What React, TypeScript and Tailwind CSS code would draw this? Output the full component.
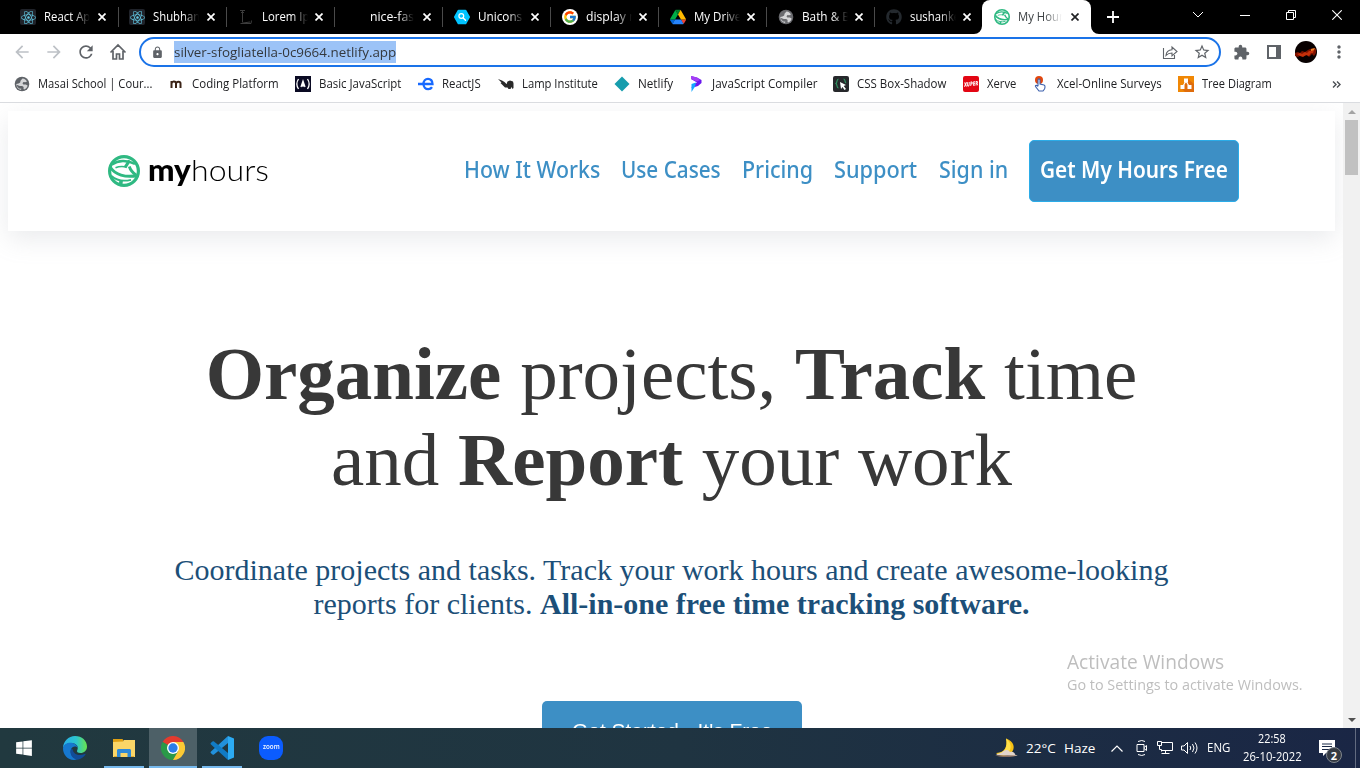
import { useLayoutEffect, useRef, useState, type ReactNode } from "react";
import { FaReact, FaWindows, FaGithub } from "react-icons/fa";
import { FcGoogle } from "react-icons/fc";
import {
  MdArrowBack,
  MdArrowForward,
  MdRefresh,
  MdLock,
  MdStarBorder,
  MdExtension,
  MdMoreVert,
} from "react-icons/md";

/** A single line of text, condensed or stretched to fill `width` pixels. */
function Line({ children, width, className = "" }: { children: string; width: number; className?: string }) {
  const ref = useRef<HTMLSpanElement>(null);
  const [scale, setScale] = useState(1);
  useLayoutEffect(() => {
    const el = ref.current;
    if (el) setScale(width / el.offsetWidth);
  }, [children, width]);
  return (
    <span className={`block shrink-0 text-left whitespace-nowrap ${className}`} style={{ width }}>
      <span ref={ref} className="inline-block origin-left" style={{ transform: `scaleX(${scale})` }}>
        {children}
      </span>
    </span>
  );
}

function ReactTile() {
  return (
    <span className="flex size-4 items-center justify-center rounded-xs bg-[#20232a]">
      <FaReact className="size-[15px] text-[#61c5e0]" />
    </span>
  );
}

function Globe({ className }: { className: string }) {
  return (
    <svg viewBox="0 0 16 16" className={`size-4 ${className}`}>
      <circle cx="8" cy="8" r="7.300" fill="currentColor" />
      <path
        d="M8.500 2.500c2 .2 3.800 1.500 4.500 3l-1.800.8-1.700-.3-1 1.200.8 1.200 2.500.2 1.800.9c-.3 2-1.800 3.600-3.600 4.100l-.6-1.400.3-1.300-1.600-1-2.300.2-3.200-1.300c.3 1.500 1.500 3.200 3.200 3.900l1.400-.1-.1 1.300C4.200 13.400 2.200 11 2.200 8l2.300-.4 1.700-1.200.3-1.600z"
        className="text-[#d5d6d8]"
        fill="currentColor"
      />
    </svg>
  );
}

function HoursMark({ className }: { className: string }) {
  return (
    <svg viewBox="0 0 32 32" className={className} fill="none" stroke="#2fb982">
      <circle cx="16" cy="16" r="14.400" strokeWidth="3.200" />
      <path d="M4 9.500C10 5.200 19 4.800 27 9" strokeWidth="2.400" />
      <path d="M2.500 12.500C7 19.500 17 23 30 20.500" strokeWidth="3" />
      <path d="M21.500 5.500L17 12.500" strokeWidth="3.200" />
      <path d="M7.500 12.800C11 11.300 15 11.300 18.500 12" strokeWidth="1.600" />
      <path d="M21.300 11.500C22.300 15 24.500 17.500 28 20" strokeWidth="2.800" />
      <path d="M3.500 21C8 25 15 26.800 23 24.800" strokeWidth="1.800" />
      <path d="M13.200 25L12.500 30" strokeWidth="3.600" />
    </svg>
  );
}

function DriveIcon() {
  return (
    <svg viewBox="0 0 87.300 78" className="size-4">
      <path d="M6.600 66.850l3.850 6.650c.8 1.400 1.950 2.500 3.300 3.300L27.500 53H0c0 1.550.4 3.100 1.200 4.500z" fill="#0066da" />
      <path d="M43.650 25L29.900 1.200c-1.350.8-2.500 1.900-3.300 3.300L1.200 48.500A9.060 9.060 0 0 0 0 53h27.500z" fill="#00ac47" />
      <path d="M73.550 76.800c1.350-.8 2.500-1.900 3.300-3.300l1.600-2.750 7.650-13.250c.8-1.400 1.200-2.950 1.200-4.500H59.800l5.850 11.500z" fill="#ea4335" />
      <path d="M43.650 25L57.400 1.200C56.050.4 54.500 0 52.900 0H34.400c-1.600 0-3.150.45-4.500 1.200z" fill="#00832d" />
      <path d="M59.800 53H27.500L13.750 76.800c1.350.8 2.900 1.200 4.500 1.200h50.800c1.600 0 3.150-.45 4.500-1.200z" fill="#2684fc" />
      <path d="M73.400 26.500L60.700 4.500c-.8-1.400-1.950-2.500-3.300-3.300L43.650 25 59.800 53h27.450c0-1.550-.4-3.100-1.200-4.500z" fill="#ffba00" />
    </svg>
  );
}

function UniconsIcon() {
  return (
    <svg viewBox="0 0 16 16" className="size-4">
      <path d="M4.500 1.800h7L15 8l-3.500 6.200h-7L1 8z" fill="#00c3ff" stroke="#00c3ff" strokeWidth="2" strokeLinejoin="round" />
      <circle cx="7.300" cy="7" r="2.400" fill="none" stroke="#fff" strokeWidth="1.200" />
      <path d="M9.200 9l2.300 2.300" stroke="#fff" strokeWidth="1.400" strokeLinecap="round" />
    </svg>
  );
}

function LoremIcon() {
  return (
    <svg viewBox="0 0 16 16" className="size-4" fill="none" stroke="#3c3c3c" strokeWidth="1">
      <path d="M2 1.500h5M4.500 1.500v12M2.500 14.500h10.500l.5-3M5 14l7-1M3 3.500h3" />
    </svg>
  );
}

function CloseIcon({ dark = false }: { dark?: boolean }) {
  return (
    <svg viewBox="0 0 8 8" className={`size-2 ${dark ? "text-[#202124]" : "text-white"}`}>
      <path d="M.5.5l7 7M7.500.5l-7 7" stroke="currentColor" strokeWidth="1.700" />
    </svg>
  );
}

type TabInfo = { title: string; width: number; lead: string; tail: string; icon: ReactNode };

const tabs: TabInfo[] = [
  { title: "React App", width: 53, lead: "ml-2.5", tail: "mr-3", icon: <ReactTile /> },
  { title: "Shubham", width: 51, lead: "ml-[11px]", tail: "mr-[11px]", icon: <ReactTile /> },
  { title: "Lorem Ips", width: 53, lead: "ml-3", tail: "mr-[11px]", icon: <LoremIcon /> },
  { title: "nice-fast", width: 48, lead: "ml-2.5", tail: "mr-[11px]", icon: <span className="block size-4" /> },
  { title: "Unicons", width: 44, lead: "ml-3", tail: "mr-[11px]", icon: <UniconsIcon /> },
  {
    title: "display no",
    width: 58,
    lead: "ml-3",
    tail: "mr-[11px]",
    icon: (
      <span className="flex size-4 items-center justify-center rounded-full bg-white">
        <FcGoogle className="size-3.5" />
      </span>
    ),
  },
  { title: "My Drive", width: 47, lead: "ml-3", tail: "mr-[11px]", icon: <DriveIcon /> },
  { title: "Bath & Bo", width: 55, lead: "ml-3", tail: "mr-[11px]", icon: <Globe className="text-[#6a6b6f]" /> },
  { title: "sushanke", width: 50, lead: "ml-3", tail: "mr-[11px]", icon: <FaGithub className="size-4 text-[#24292e]" /> },
];

function TabStrip() {
  return (
    <div className="flex h-[34px] bg-black pl-2.5 font-['Open_Sans',sans-serif]">
      {tabs.map((tab, i) => (
        <div key={tab.title} className="flex w-[108px] shrink-0 items-center">
          <span className={`shrink-0 ${tab.lead}`}>{tab.icon}</span>
          <div className={`${i === 3 ? "ml-2.5 w-[44px]" : "ml-2 w-[46px]"} overflow-hidden mask-r-from-65% mask-r-to-100%`}>
            <Line width={tab.width} className="text-[12px] leading-4 font-medium text-white">
              {tab.title}
            </Line>
          </div>
          <span className={`ml-auto ${tab.tail}`}>
            <CloseIcon />
          </span>
          {i < 8 && <span className="-mr-px h-5 w-px bg-[#4a4a4a]" />}
        </div>
      ))}
      <div className="relative flex w-[109px] shrink-0 items-center rounded-t-lg bg-white">
        <svg viewBox="0 0 8 8" className="absolute bottom-0 -left-2 size-2">
          <path d="M8 0v8H0a8 8 0 0 0 8-8z" fill="#fff" />
        </svg>
        <svg viewBox="0 0 8 8" className="absolute -right-2 bottom-0 size-2">
          <path d="M0 0v8h8a8 8 0 0 1-8-8z" fill="#fff" />
        </svg>
        <HoursMark className="ml-3 size-4 shrink-0" />
        <div className="ml-2 w-11 overflow-hidden mask-r-from-60% mask-r-to-100%">
          <Line width={51} className="text-[12px] leading-4 text-[#3c4043]">
            My Hours
          </Line>
        </div>
        <span className="mr-3 ml-auto">
          <CloseIcon dark />
        </span>
      </div>
      <svg viewBox="0 0 12 12" className="mt-[11px] ml-4 size-3">
        <path d="M6 0v12M0 6h12" stroke="#fff" strokeWidth="1.800" />
      </svg>
      <div className="ml-auto flex h-[29px] items-center pr-[18px] text-white">
        <svg viewBox="0 0 12 8" className="mr-9 h-2 w-3">
          <path d="M1 1l5 5 5-5" fill="none" stroke="currentColor" />
        </svg>
        <svg viewBox="0 0 10 10" className="mr-9 size-2.5">
          <path d="M0 5.500h10" stroke="currentColor" />
        </svg>
        <svg viewBox="0 0 10 10" className="mr-9 size-2.5">
          <path d="M.5 2.500h7v7h-7zM2.500 2.500v-2h7v7h-2" fill="none" stroke="currentColor" />
        </svg>
        <svg viewBox="0 0 10 10" className="size-2.5">
          <path d="M.3.3l9.400 9.400M9.700.3L.3 9.700" stroke="currentColor" strokeWidth="1.100" />
        </svg>
      </div>
    </div>
  );
}

function Toolbar() {
  return (
    <div className="flex h-9 items-center bg-white font-['Open_Sans',sans-serif] text-[#5f6368]">
      <div className="flex w-[139px] items-center gap-3 pl-3">
        <MdArrowBack className="size-5 text-[#bdc1c6]" />
        <MdArrowForward className="size-5 text-[#bdc1c6]" />
        <MdRefresh className="size-5" />
        <svg viewBox="0 0 20 20" className="size-5" fill="none" stroke="currentColor" strokeWidth="1.700">
          <path d="M2.500 10.500L10 3l7.500 7.500M5 9v8h3.500v-5h3v5H15V9" />
        </svg>
      </div>
      <div className="flex h-[30px] w-[1082px] items-center rounded-full border-2 border-[#1a73e8] bg-white pl-2.5">
        <MdLock className="size-[13px]" />
        <span className="ml-2.5 flex h-[22px] items-center bg-[#9cc3f7]">
          <Line width={222} className="text-[13.5px] leading-[22px] text-[#34383d]">
            silver-sfogliatella-0c9664.netlify.app
          </Line>
        </span>
        <svg viewBox="0 0 16 16" className="mr-[15px] ml-auto size-4" fill="none" stroke="currentColor" strokeWidth="1.100">
          <path d="M1.500 4v10.500h11V11M4 11.500c.3-3.500 2.500-5.500 6-5.700V3l5 4.500-5 4.300V9c-2.500 0-4.500.8-6 2.500z" />
        </svg>
        <MdStarBorder className="mr-2 size-[18px]" />
      </div>
      <div className="ml-3 flex items-center">
        <MdExtension className="size-[17px]" />
        <svg viewBox="0 0 14 14" className="ml-[17px] size-3.5">
          <path d="M0 0h14v14H0z M2 2v10h7V2z" fill="currentColor" fillRule="evenodd" />
        </svg>
        <svg viewBox="0 0 22 22" className="ml-3.5 size-[22px]">
          <circle cx="11" cy="11" r="11" fill="#080000" />
          <path d="M0 12l3-1 2 1 2-2 3 1 3-2 2-1 4-1 2 1v4l-2 3-2-2-3 3-2-2-3 1-3-1-3 2-3-1z" fill="#7d1200" />
          <path d="M2 13l3-1 2 1 3-2 2 1 2-2 2 0 1-2 2 1-1 3-2 0-2 3-3-1-3 2-3-1z" fill="#c5300a" />
          <path d="M16 8l4-1-1 2-3 1z" fill="#e98426" />
        </svg>
        <MdMoreVert className="ml-3 size-5" />
      </div>
    </div>
  );
}

type Bookmark = { label: string; width: number; gap: string; icon: ReactNode };

const bookmarks: Bookmark[] = [
  { label: "Masai School | Cour...", width: 114, gap: "mr-4", icon: <Globe className="text-[#5f6368]" /> },
  {
    label: "Coding Platform",
    width: 87,
    gap: "mr-4",
    icon: (
      <svg viewBox="0 0 16 16" className="size-4" fill="none" stroke="#3b2417" strokeWidth="2">
        <path d="M3.500 12V5M3.500 7.500C4 5 7.500 5 8 7v5M8 7.500C8.500 5 12.500 5 12.500 7.500V12" />
      </svg>
    ),
  },
  {
    label: "Basic JavaScript",
    width: 82,
    gap: "mr-[17px]",
    icon: (
      <svg viewBox="0 0 16 16" className="size-4">
        <path d="M0 0h16v16H0z" fill="#0a0a23" />
        <path d="M3.500 3C1.500 6 1.500 10 3.500 13M12.500 3c2 3 2 7 0 10M6 11l2-6 2 6M8 7v4" fill="none" stroke="#fff" strokeWidth="1.300" />
      </svg>
    ),
  },
  {
    label: "ReactJS",
    width: 39,
    gap: "mr-[17px]",
    icon: (
      <svg viewBox="0 0 16 16" className="size-4" fill="none" stroke="#1769ff" strokeWidth="2.300">
        <path d="M0 8h14.500C14.500 4.500 12.500 2.800 10 2.800S5.500 5 5.500 8s2 5.200 4.700 5.200c1.700 0 3-.7 3.800-2" />
      </svg>
    ),
  },
  {
    label: "Lamp Institute",
    width: 76,
    gap: "mr-4",
    icon: (
      <svg viewBox="0 0 16 16" className="size-4" fill="#292929">
        <path d="M0 3l4 1.500L6.500 6l2 2 1-2.500 2.500-1 3 1 .5 2V12l-1 1-1-2-1 2h-2l-1-1.500H7L4.500 9l-2-2 1-.5z" />
      </svg>
    ),
  },
  {
    label: "Netlify",
    width: 35,
    gap: "mr-[15px]",
    icon: (
      <svg viewBox="0 0 16 16" className="size-4">
        <path d="M8 .5L15.500 8 8 15.500.5 8z" fill="#169dad" />
      </svg>
    ),
  },
  {
    label: "JavaScript Compiler",
    width: 105,
    gap: "mr-4",
    icon: (
      <svg viewBox="0 0 16 16" className="size-4">
        <path d="M3 0l6 1.500L13.500 4v3L10 10 3.500 12l1-3.500L9 6.500 3 3z" fill="#6a17ee" />
        <path d="M3 0l6 1.500L12 4l-3 1.500L3 3z" fill="#a43df5" />
        <path d="M3.500 8L8 6.500l-1 4-3.500 5.500z" fill="#14a7ff" />
      </svg>
    ),
  },
  {
    label: "CSS Box-Shadow",
    width: 89,
    gap: "mr-[17px]",
    icon: (
      <svg viewBox="0 0 16 16" className="size-4">
        <rect width="16" height="16" rx="2" fill="#26282b" />
        <path d="M5.500 3C3.500 3 4.500 6.500 3 7.500 4.500 8.500 3.500 12 5.500 12M10.500 3c2 0 1 3 2.500 4" fill="none" stroke="#309261" strokeWidth="1.200" />
        <path d="M7 6l6 3-2.300 1 2.300 3-1.500 1-2-3-1.500 2z" fill="#fff" />
      </svg>
    ),
  },
  {
    label: "Xerve",
    width: 29,
    gap: "mr-[17px]",
    icon: (
      <span className="flex size-4 items-center justify-center rounded-xs bg-[#e30613]">
        <Line width={14} className="-rotate-6 text-[6px] leading-[7px] font-extrabold text-white italic">
          XUPER
        </Line>
      </span>
    ),
  },
  {
    label: "Xcel-Online Surveys",
    width: 105,
    gap: "mr-4",
    icon: (
      <svg viewBox="0 0 16 16" className="size-4">
        <circle cx="6" cy="4" r="4" fill="#e2470e" />
        <path d="M5 10V4c0-1.500 2-1.500 2 0v4l4 1c1.500.5 1 3 .5 4L10 15H6l-3.500-4.500C2 9 4 9 5 10.500" fill="#fff" stroke="#3d61ad" strokeWidth="1.100" />
      </svg>
    ),
  },
  {
    label: "Tree Diagram",
    width: 70,
    gap: "",
    icon: (
      <svg viewBox="0 0 16 16" className="size-4">
        <path d="M0 0h16v16H0z" fill="#f08705" />
        <path d="M10 3l6 5v8H7l-4-4z" fill="#df6c0c" />
        <path d="M8 5L4.500 11M8 5l3.500 6" stroke="#fff" strokeWidth="1.200" />
        <path d="M6 2.500h4v4H6zM2.500 9h4v4h-4zM9.500 9h4v4h-4z" fill="#fff" />
      </svg>
    ),
  },
];

function BookmarkBar() {
  return (
    <div className="flex h-[33px] items-center border-b border-[#dadce0] bg-white pb-1 pl-3.5 font-['Open_Sans',sans-serif]">
      {bookmarks.map((b) => (
        <div key={b.label} className={`flex shrink-0 items-center gap-2 ${b.gap}`}>
          {b.icon}
          <Line width={b.width} className="text-[12px] leading-4 text-[#202124]">
            {b.label}
          </Line>
        </div>
      ))}
      <svg viewBox="0 0 9 7" className="mr-[19px] ml-auto h-[7px] w-[9px]">
        <path d="M1 .5l3 3-3 3M5 .5l3 3-3 3" fill="none" stroke="#4b4f54" strokeWidth="1.400" />
      </svg>
    </div>
  );
}

const navLinks = [
  { label: "How It Works", width: 136 },
  { label: "Use Cases", width: 100 },
  { label: "Pricing", width: 71 },
  { label: "Support", width: 83 },
  { label: "Sign in", width: 69 },
];

function SiteHeader() {
  return (
    <header className="mx-2 mt-2 flex h-[120px] items-center bg-white pr-24 pl-[100px] shadow-[0_8px_24px_rgba(149,157,165,0.2)]">
      <div className="flex items-center gap-2">
        <HoursMark className="size-8" />
        <div className="flex pb-1 font-['Lato',sans-serif] text-[30px] leading-8 text-black">
          <Line width={43} className="font-black">my</Line>
          <Line width={78} className="font-light">hours</Line>
        </div>
      </div>
      <nav className="ml-auto flex items-center gap-[21.300px] font-['Noto_Sans',sans-serif] text-[23px] leading-[30px] font-medium text-[#3d8fc5]">
        {navLinks.map((l) => (
          <Line key={l.label} width={l.width} className="-mt-1">
            {l.label}
          </Line>
        ))}
        <button className="h-[62px] w-[210px] rounded-[5px] border border-[#2bace8] bg-[#3d8fc5] pb-1 pl-2.5 font-semibold text-white">
          <Line width={188}>Get My Hours Free</Line>
        </button>
      </nav>
    </header>
  );
}

function Page() {
  return (
    <main className="flex h-[625px] overflow-hidden bg-white">
      <div className="w-[1343px] overflow-hidden">
        <SiteHeader />
        <section className="flex flex-col items-center font-['Liberation_Serif',serif]">
          <h1 className="mt-[100px] text-center text-[75px] leading-[86px] whitespace-nowrap text-[#383838]">
            <b>Organize</b> projects, <b>Track</b> time
            <br />
            and <b>Report</b> your work
          </h1>
          <p className="mt-[50px] text-center text-[30px] leading-[34px] whitespace-nowrap text-[#1c4f78]">
            Coordinate projects and tasks. Track your work hours and create awesome-looking
            <br />
            reports for clients. <b>All-in-one free time tracking software.</b>
          </p>
          <button className="mt-20 flex h-[60px] w-[260px] items-center justify-center rounded-[5px] bg-[#3d8fc5] font-['Liberation_Sans',sans-serif] text-[20.500px] leading-6 text-white">
            <Line width={200}>Get Started - It's Free</Line>
          </button>
        </section>
      </div>
      <div className="flex w-[17px] flex-col items-center bg-[#f1f1f1] pt-[7px] pb-1.5">
        <svg viewBox="0 0 8 4" className="h-1 w-2">
          <path d="M4 0l4 4H0z" fill="#a3a3a3" />
        </svg>
        <div className="mt-1.5 h-[55px] w-[13px] bg-[#c1c1c1]" />
        <svg viewBox="0 0 8 4" className="mt-auto h-1 w-2">
          <path d="M0 0h8L4 4z" fill="#505050" />
        </svg>
      </div>
    </main>
  );
}

function EdgeIcon() {
  return (
    <svg viewBox="0 0 24 24" className="size-6">
      <defs>
        <linearGradient id="edgeTop" x1="0" x2="1">
          <stop offset="0" stopColor="#28aee8" />
          <stop offset=".55" stopColor="#2cc5cf" />
          <stop offset="1" stopColor="#69e34b" />
        </linearGradient>
      </defs>
      <path d="M0 12C.3 5 5.500 0 12 0c7 0 12 4.800 12 10.500 0 4-3 6.500-6.500 6.500-3 0-4-1.500-3.300-2.800 1-1.700 1-5.200-3-6.700C7 6 2 7.500 0 12z" fill="url(#edgeTop)" />
      <path d="M0 12.500C.5 8.500 4 6.800 7.500 6.800c3.500 0 6.500 2.200 7.300 5C13 9.500 9 10 8 13.500c-1.200 4.500 1.500 8.500 6 10C6 25.500 0 19.500 0 12.500z" fill="#1678cf" />
      <path d="M8.300 12.500c-2.500 5 1 10.500 6.200 11.200 3.500-.7 6.500-3 8-5.200.3-.6-.2-.8-.8-.5-5.700 2.500-11.200.2-12-4.300 0-.5-.5-1-1.400-1.200z" fill="#114c97" />
    </svg>
  );
}

function ExplorerIcon() {
  return (
    <svg viewBox="0 0 22 20" className="h-5 w-[22px]">
      <path d="M0 1h9.500l1 1.500V9H0z" fill="#e0a013" />
      <path d="M0 4l10-.5 1-1.500h11v17H0z" fill="#fbd667" />
      <path d="M4 19v-6.500c0-1 .7-1.500 1.500-1.500h11c.8 0 1.500.5 1.500 1.500V19h-3.500v-4h-7v4z" fill="#2f8ad8" />
      <path d="M1 18.500h3M18 18.500h3" stroke="#e4ac32" />
    </svg>
  );
}

function ChromeIcon() {
  return (
    <svg viewBox="0 0 48 48" className="size-6">
      <path d="M24 24L3.200 12A24 24 0 0 1 44.800 12z" fill="#e33b2e" />
      <path d="M24 24L3.200 12A24 24 0 0 0 24 48l10.400-18z" fill="#2a9948" />
      <path d="M24 12h20.800A24 24 0 0 1 24 48l10.400-18z" fill="#fcc934" />
      <circle cx="24" cy="24" r="12" fill="#fff" />
      <circle cx="24" cy="24" r="9.300" fill="#2b7de9" />
    </svg>
  );
}

function CodeIcon() {
  return (
    <svg viewBox="0 0 24 24" className="size-6">
      <path d="M18 0L1 15.500c-.6.6-.6 1.200 0 1.700L2.500 18.500c.5.4 1 .4 1.500 0L18 7z" fill="#2291db" />
      <path d="M18 24L1 8.500c-.6-.6-.6-1.200 0-1.700L2.500 5.500c.5-.4 1-.4 1.500 0L18 17z" fill="#117bc4" />
      <path d="M18 0l6 2.500v19L18 24z" fill="#2cabf3" />
    </svg>
  );
}

const pinned = [
  { name: "start", cell: "mr-[3px]", bar: "", icon: <FaWindows className="size-[18px] text-white" /> },
  { name: "edge", cell: "mr-px", bar: "", icon: <EdgeIcon /> },
  { name: "explorer", cell: "mr-px", bar: "w-10", icon: <ExplorerIcon /> },
  { name: "chrome", cell: "mr-px bg-[#4d6067]", bar: "w-12", icon: <ChromeIcon /> },
  { name: "code", cell: "mr-px", bar: "w-10", icon: <CodeIcon /> },
  {
    name: "zoom",
    cell: "",
    bar: "",
    icon: (
      <span className="flex size-6 items-center justify-center rounded-[9px] bg-[#0b5cff]">
        <Line width={17} className="-mt-0.5 text-[7px] leading-[10px] font-semibold text-white">
          zoom
        </Line>
      </span>
    ),
  },
];

function MoonIcon() {
  return (
    <svg viewBox="0 0 24 20" className="h-5 w-6">
      <path d="M12 .5c8 2.500 10 10 5 14.500-4 3.500-11 3.500-15 0 8 0 12-6 10-14.500z" fill="#f7c114" />
      <path d="M12 .5c5 4 6 9 3 13-3 3-8 3-12 1.500 8 0 11-6 9-14.500z" fill="#ffe04a" />
      <path d="M2 17c2-2 4-1.500 6-2.500 2-3 6-3.500 8-.5 3-1 5 1 5 2.500l2.500 1.500z" fill="#e2d5cb" />
      <path d="M1 17.500h22.500c-4 1.700-18 1.700-22.500 0z" fill="#a9836a" />
    </svg>
  );
}

function Taskbar() {
  return (
    <footer className="flex h-10 bg-linear-to-r from-[#21393f] via-[#1f3441] to-[#1a2645] font-['Open_Sans',sans-serif] text-white">
      {pinned.map((p) => (
        <div key={p.name} className={`flex w-12 shrink-0 flex-col items-center ${p.cell}`}>
          <div className="flex h-[38px] items-center pt-0.5">{p.icon}</div>
          <span className={`h-0.5 bg-[#76b9ed] ${p.bar}`} />
        </div>
      ))}
      <div className="ml-auto flex items-center">
        <MoonIcon />
        <Line width={30} className="ml-2 text-[13.5px] leading-5">22°C</Line>
        <Line width={31} className="ml-2 text-[13.5px] leading-5">Haze</Line>
        <svg viewBox="0 0 12 7" className="ml-4 h-[7px] w-3">
          <path d="M.5 6.500L6 1l5.500 5.500" fill="none" stroke="currentColor" strokeWidth="1.200" />
        </svg>
        <svg viewBox="0 0 12 16" className="ml-[13px] h-4 w-3" fill="none" stroke="currentColor">
          <path d="M1 4.500h7v7H1zM8 7.500l2.500-2v5L8 8.500M2 1.500Q6-.5 9 1.500M2 14.500q4 2 7 0" />
        </svg>
        <svg viewBox="0 0 16 14" className="ml-[9px] h-3.5 w-4" fill="none" stroke="currentColor">
          <path d="M4.500 1.500h11v8h-11M4.500 12.500h8M8.500 9.500v3M.5.5h4v4h-4zM2.500 4.500v4h2v2" />
        </svg>
        <svg viewBox="0 0 17 14" className="ml-2 h-3.5 w-[17px]" fill="none" stroke="currentColor">
          <path d="M.5 5h2.500l3.500-3.500v11L3 9H.5zM9 5q1.500 2 0 4M11.500 3q3 4 0 8M14 1.500q4 5.500 0 11" />
        </svg>
        <Line width={23} className="ml-[9px] text-[12px] leading-5">ENG</Line>
        <div className="ml-3 flex w-[60px] flex-col items-center text-[12px] leading-[18px]">
          <Line width={28}>22:58</Line>
          <Line width={59}>26-10-2022</Line>
        </div>
        <div className="relative ml-4 h-5 w-5">
          <svg viewBox="0 0 16 16" className="mt-0.5 ml-px size-4">
            <path d="M0 0h16v13H7l-3 3v-3H0z" fill="#fff" />
            <path d="M3 4h10M3 6.500h10M3 9.500h8" stroke="#1b2a46" />
          </svg>
          <span className="absolute top-[9px] left-2 flex size-4 items-center justify-center rounded-full border border-[#80868d] bg-[#343a43] text-[11px] leading-none font-bold">
            2
          </span>
        </div>
        <span className="mr-1 ml-[17px] h-10 w-px bg-[#626b80]" />
      </div>
    </footer>
  );
}

export default function App() {
  return (
    <div className="relative h-[768px] w-[1360px] overflow-hidden">
      <TabStrip />
      <Toolbar />
      <BookmarkBar />
      <Page />
      <Taskbar />
      <aside className="absolute top-[650px] left-[1067px] font-['Open_Sans',sans-serif] text-[#bebebe]">
        <Line width={157} className="text-[20px] leading-6">Activate Windows</Line>
        <Line width={236} className="text-[14.5px] leading-[22px]">Go to Settings to activate Windows.</Line>
      </aside>
    </div>
  );
}
